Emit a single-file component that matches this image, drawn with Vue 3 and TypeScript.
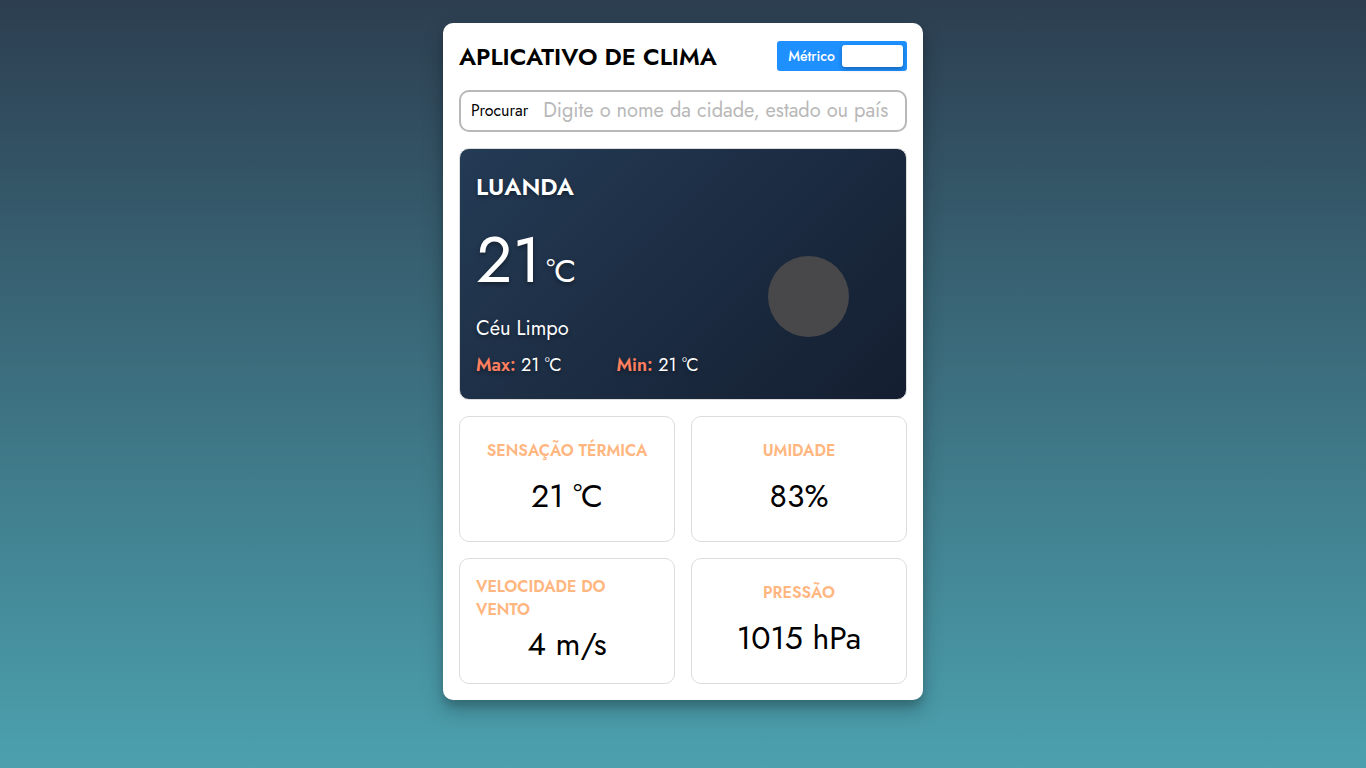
<script setup lang="ts">
import { ref } from 'vue'

interface Stat {
  label: string
  value: string
}

const metric = ref<boolean>(true)
const query = ref<string>('')

const stats: Stat[] = [
  { label: 'Sensação térmica', value: '21 °C' },
  { label: 'Umidade', value: '83%' },
  { label: 'Velocidade do vento', value: '4 m/s' },
  { label: 'Pressão', value: '1015 hPa' },
]
</script>

<template>
  <div class="page">
    <main class="panel">
      <header class="header">
        <h1 class="title">Aplicativo de Clima</h1>
        <label class="units">
          <input v-model="metric" class="units-input" type="checkbox" />
          <span class="units-text">Métrico</span>
          <span class="units-knob"></span>
        </label>
      </header>

      <form class="search" @submit.prevent>
        <label class="search-label" for="place">Procurar</label>
        <input
          id="place"
          v-model="query"
          class="search-input"
          type="text"
          placeholder="Digite o nome da cidade, estado ou país"
        />
      </form>

      <section class="current">
        <div class="reading">
          <h2 class="city">Luanda</h2>
          <p class="temp">21<span class="unit">°C</span></p>
          <p class="sky">Céu Limpo</p>
          <div class="range">
            <p class="limit"><strong>Max:</strong> 21 °C</p>
            <p class="limit"><strong>Min:</strong> 21 °C</p>
          </div>
        </div>
        <svg class="moon" viewBox="0 0 100 100" aria-hidden="true">
          <circle cx="50" cy="50" r="50" fill="#48484a" />
        </svg>
      </section>

      <section class="stats">
        <article v-for="stat in stats" :key="stat.label" class="stat">
          <h3 class="stat-label">{{ stat.label }}</h3>
          <p class="stat-value">{{ stat.value }}</p>
        </article>
      </section>
    </main>
  </div>
</template>

<style>
body {
  margin: 0;
}
</style>

<style scoped>
.page {
  box-sizing: border-box;
  min-height: 100vh;
  padding: 23px 16px;
  background: linear-gradient(#2c3e50, #4ca1af);
  font-family: Jost, Lato, 'Open Sans', sans-serif;
  color: #000;
}

.page * {
  box-sizing: border-box;
}

h1,
h2,
h3,
p {
  margin: 0;
}

.panel {
  display: flex;
  flex-direction: column;
  gap: 16px;
  max-width: 480px;
  margin: 0 auto;
  padding: 16px;
  border-radius: 10px;
  background: #fff;
  box-shadow: 0 10px 20px rgba(0, 0, 0, 0.25), 0 6px 6px rgba(0, 0, 0, 0.1);
}

.header {
  display: flex;
  align-items: flex-start;
  justify-content: space-between;
}

.title {
  font-size: 24px;
  line-height: 35px;
  font-weight: 600;
  text-transform: uppercase;
}

.units {
  position: relative;
  display: grid;
  grid-template-columns: 1fr 1fr;
  align-items: center;
  width: 130px;
  height: 30px;
  margin-top: 2px;
  padding: 4px;
  border-radius: 3px;
  background: #1e90ff;
  color: #fff;
  font-size: 14px;
  font-weight: 500;
  text-align: center;
  cursor: pointer;
}

.units-input {
  position: absolute;
  inset: 0;
  margin: 0;
  opacity: 0;
  cursor: pointer;
}

.units-knob {
  height: 22px;
  border-radius: 3px;
  background: #fff;
  box-shadow: 0 2px 4px rgba(0, 0, 0, 0.3);
}

.search {
  display: flex;
  align-items: center;
  height: 42px;
  padding: 0 10px 2px;
  border: 2px solid #b8b8b8;
  border-radius: 10px;
}

.search-label {
  font-size: 16px;
}

.search-input {
  flex: 1;
  min-width: 0;
  margin-left: 15px;
  padding: 0;
  border: 0;
  outline: 0;
  background: transparent;
  font-family: inherit;
  font-size: 20px;
  color: #000;
}

.search-input::placeholder {
  color: #b8b8b8;
  opacity: 1;
}

.current {
  display: flex;
  align-items: center;
  justify-content: space-between;
  padding: 16px;
  border: 1px solid #dcdcdc;
  border-radius: 10px;
  background: linear-gradient(135deg, #243b55, #141e30);
  color: #fff;
  text-shadow: 0 2px 4px rgba(0, 0, 0, 0.4);
}

.city {
  font-size: 24px;
  line-height: 44px;
  font-weight: 600;
  text-transform: uppercase;
}

.temp {
  font-size: 64px;
  line-height: 102px;
}

.unit {
  margin-left: 5px;
  font-size: 32px;
  line-height: 1;
}

.sky {
  font-size: 20px;
  line-height: 36px;
}

.range {
  display: flex;
  gap: 55px;
}

.limit {
  font-size: 18px;
  line-height: 36px;
}

.limit strong {
  color: #ff7f5f;
  font-weight: 600;
}

.moon {
  width: 81px;
  height: 81px;
  margin: 45px 41px 0 0;
}

.stats {
  display: grid;
  grid-template-columns: 1fr 1fr;
  gap: 16px;
}

.stat {
  display: flex;
  flex-direction: column;
  align-items: center;
  justify-content: space-around;
  height: 126px;
  padding: 16px;
  border: 1px solid #dcdcdc;
  border-radius: 10px;
}

.stat-label {
  color: #ffb67f;
  font-size: 16px;
  line-height: 23px;
  font-weight: 600;
  text-transform: uppercase;
}

.stat-value {
  font-size: 32px;
  line-height: 46px;
}
</style>
